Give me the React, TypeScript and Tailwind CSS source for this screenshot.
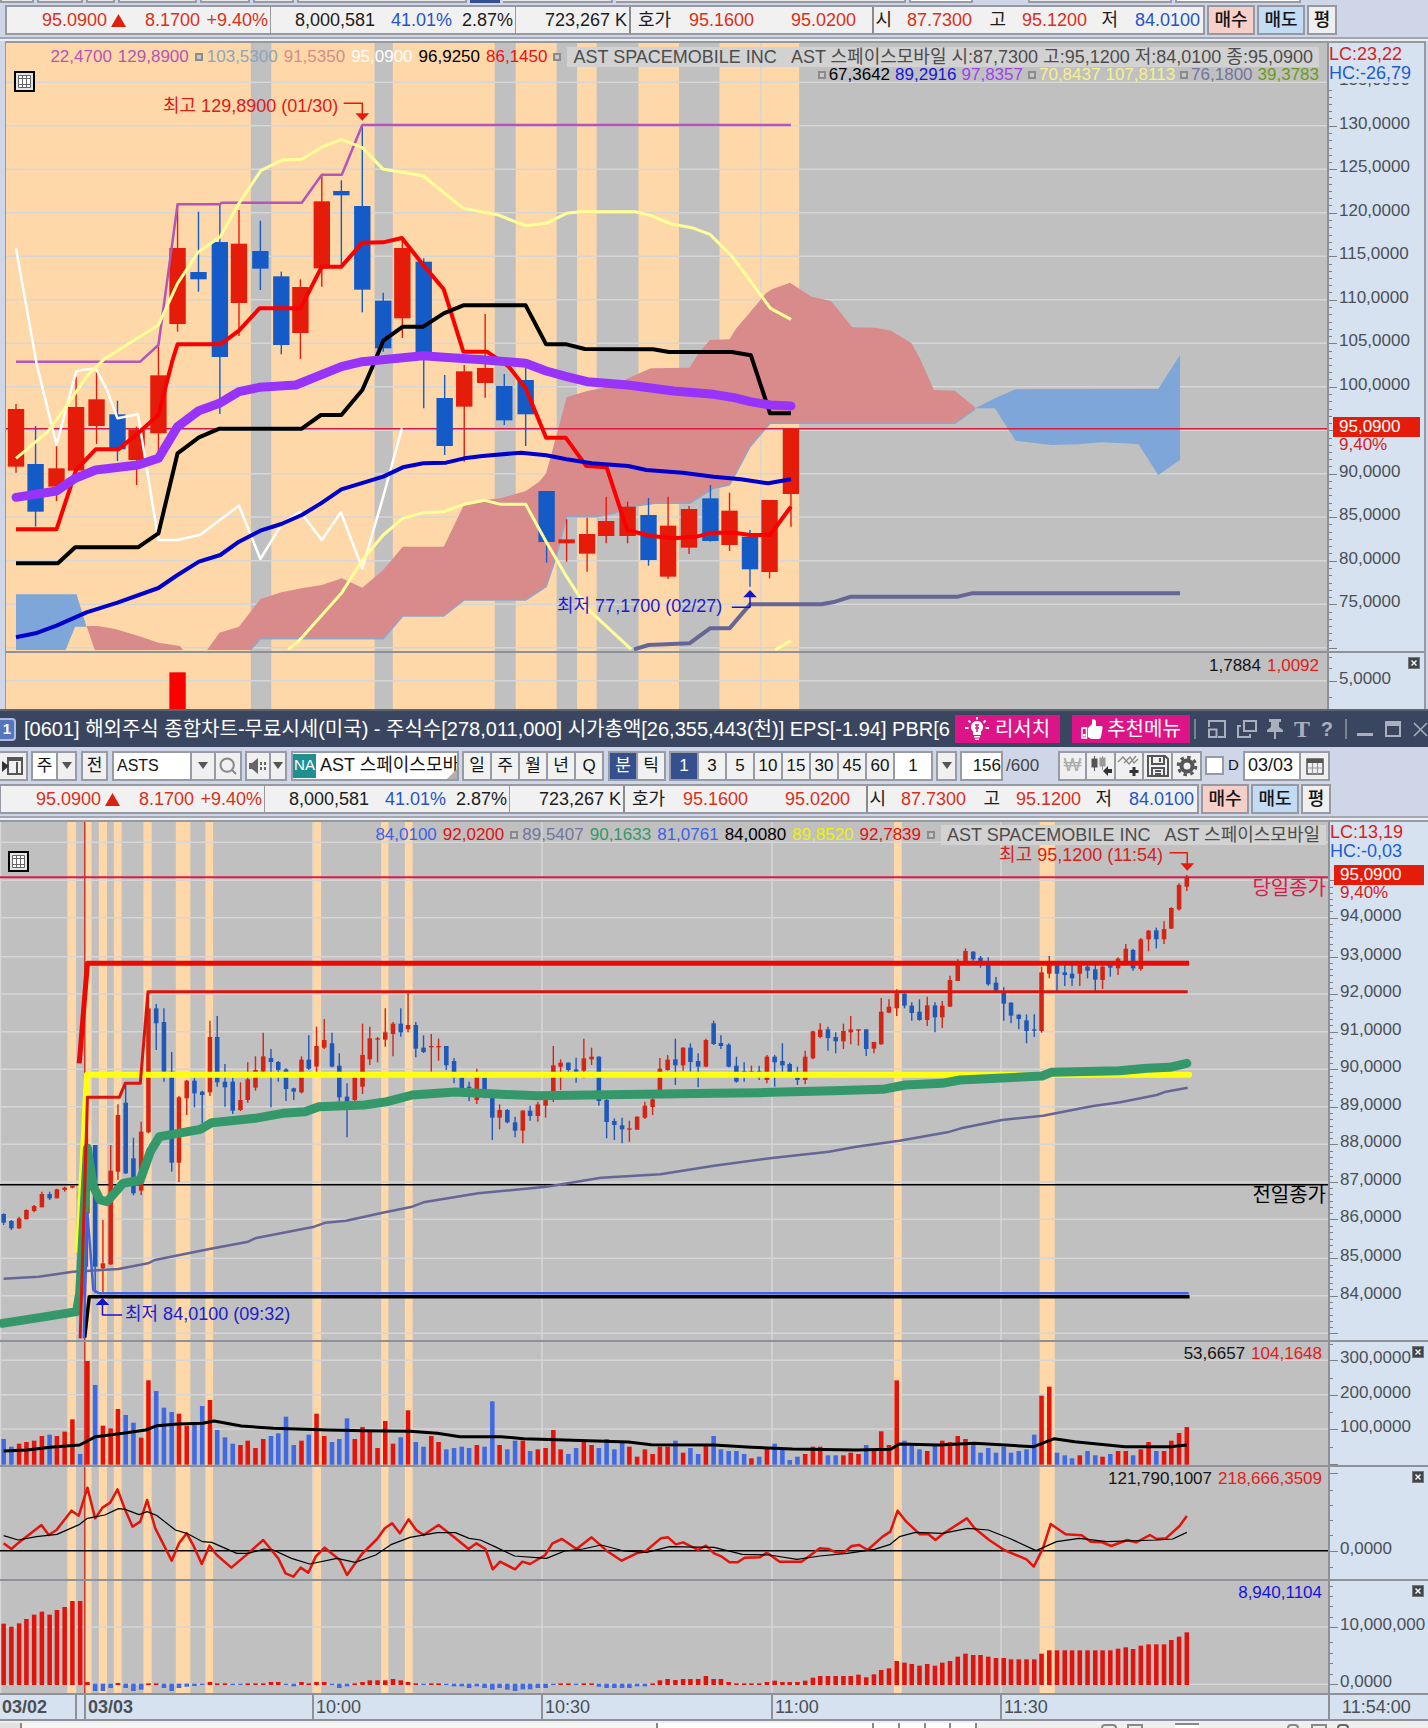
import React from "react";
import {
  CalendarDays,
  Save,
  Search,
  Settings,
  ThumbsUp,
  Volume1,
} from "lucide-react";

/* ------------------------------------------------------------------ */
/* Plot units: every horizontal pixel is 2.196 units, every vertical 3 */
/* ------------------------------------------------------------------ */

const Y_UNIT = 3;

type Pt = [number, number];
type Candle = [x: number, high: number, top: number, bottom: number, low: number, color: "R" | "B"];

const shift = (pts: Pt[], dy: number): Pt[] => pts.map(([x, y]) => [x, y + dy]);
const str = (pts: Pt[]) => pts.map((p) => p.join(",")).join(" ");

const PEACH = "#fed8a8";
const GRID = "#d6d6d6";
const UP = "#e61c0a";
const DOWN = "#155bc8";

function Line({ pts, color, w }: { pts: Pt[]; color: string; w: number }) {
  return (
    <polyline
      points={str(pts)}
      fill="none"
      stroke={color}
      strokeWidth={w}
      strokeLinejoin="round"
      strokeLinecap={w > 5 ? "round" : "butt"}
    />
  );
}

function Candles({ data, half, up = UP, down = DOWN }: { data: Candle[]; half: number; up?: string; down?: string }) {
  return (
    <>
      {data.map(([x, h, t, b, l, c], i) => {
        const color = c === "R" ? up : down;
        return (
          <g key={i}>
            <line x1={x} x2={x} y1={h} y2={l} stroke={color} strokeWidth={1.4} />
            <rect x={x - half} width={half * 2} y={t} height={Math.max(b - t, 4)} fill={color} />
          </g>
        );
      })}
    </>
  );
}

/* ---------------------------- daily chart ---------------------------- */

const D_BANDS: Pt[] = [
  [13, 551], [596, 823], [863, 1087], [1133, 1223], [1268, 1311], [1403, 1492], [1581, 1756],
];
const D_GRID = [247, 377, 508, 638, 769, 899, 1030, 1160, 1291, 1421, 1551, 1682, 1813, 1943];

const dUpperBand: Pt[] = [
  [35, 1085], [308, 1085], [348, 1035], [390, 613], [483, 613], [487, 608], [663, 608], [707, 524],
  [751, 524], [796, 375], [1738, 375],
];
const dYellowTop: Pt[] = [
  [35, 1375], [105, 1295], [150, 1210], [190, 1130], [228, 1078], [348, 975], [390, 850], [435, 757],
  [484, 710], [525, 610], [573, 512], [620, 480], [663, 478], [705, 443], [750, 418], [796, 443],
  [842, 508], [885, 517], [930, 528], [1018, 625], [1095, 645], [1155, 677], [1200, 670], [1245, 640],
  [1275, 635], [1395, 635], [1430, 647], [1475, 672], [1520, 683], [1560, 703], [1608, 768],
  [1693, 925], [1738, 958],
];
const dYellowLow: Pt[] = shift(
  [
    [633, 868], [655, 845], [750, 700], [796, 600], [842, 525], [885, 475], [930, 458], [975, 455],
    [1020, 433], [1065, 421], [1100, 433], [1155, 433], [1200, 545], [1245, 650], [1290, 745], [1387, 868],
  ],
  1080,
);
const dWhite: Pt[] = [
  [35, 745], [80, 1090], [124, 1335], [167, 1115], [180, 1110], [210, 1105], [235, 1170], [258, 1255],
  [303, 1243], [348, 1620], [390, 1620], [440, 1604], [525, 1517], [572, 1677], [620, 1570], [660, 1535],
  [707, 1620], [749, 1537], [796, 1705], [842, 1490], [883, 1285],
];
const dRed: Pt[] = [
  [35, 1588], [124, 1588], [167, 1410], [210, 1348], [260, 1348], [303, 1300], [348, 1245], [378, 1085],
  [390, 1033], [484, 1033], [525, 992], [570, 925], [660, 925], [707, 800], [750, 800], [796, 728],
  [842, 727], [883, 714], [930, 795], [975, 868], [1018, 1055], [1070, 1055], [1118, 1100],
  [1155, 1165], [1200, 1313], [1243, 1313], [1288, 1398], [1333, 1402], [1378, 1590], [1430, 1608],
  [1480, 1615], [1530, 1610], [1568, 1598], [1613, 1598], [1648, 1605], [1692, 1605], [1738, 1520],
];
const dBlack: Pt[] = [
  [35, 1690], [127, 1690], [165, 1642], [303, 1642], [348, 1600], [390, 1360], [437, 1312], [482, 1286],
  [663, 1286], [705, 1245], [750, 1245], [796, 1170], [820, 1095], [842, 1022], [885, 980], [930, 980],
  [975, 940], [1018, 916], [1155, 916], [1200, 1033], [1245, 1033], [1285, 1047], [1435, 1048],
  [1470, 1056], [1608, 1056], [1650, 1066], [1692, 1240], [1738, 1240],
];
const dPurple: Pt[] = [
  [35, 1492], [124, 1473], [165, 1435], [210, 1410], [303, 1395], [348, 1375], [390, 1280], [437, 1232],
  [482, 1210], [525, 1175], [570, 1162], [650, 1155], [750, 1100], [796, 1085], [885, 1073], [930, 1067],
  [975, 1072], [1060, 1079], [1155, 1090], [1200, 1113], [1245, 1130], [1290, 1145], [1380, 1155],
  [1480, 1173], [1568, 1183], [1613, 1193], [1648, 1205], [1692, 1215], [1738, 1218],
];
const dBlue: Pt[] = shift(
  [
    [35, 832], [78, 820], [124, 797], [190, 757], [258, 728], [348, 684], [390, 645], [437, 605],
    [484, 585], [525, 545], [572, 512], [618, 492], [663, 465], [705, 430], [750, 388], [842, 350],
    [885, 322], [930, 310], [980, 308], [1020, 295], [1060, 288], [1145, 278], [1200, 286], [1245, 298],
    [1300, 310], [1380, 318], [1420, 330], [1500, 338], [1568, 350], [1628, 358], [1688, 370], [1738, 358],
  ],
  1080,
);
const dSlate: Pt[] = shift(
  [
    [1393, 868], [1425, 855], [1515, 850], [1560, 805], [1603, 805], [1648, 733], [1805, 733],
    [1835, 725], [1870, 710], [2105, 710], [2135, 700], [2593, 700],
  ],
  1080,
);
const cloudRedLeft: Pt[] = shift(
  [[190, 798], [215, 798], [255, 808], [303, 827], [348, 848], [395, 858], [402, 870], [208, 870]],
  1080,
);
const cloudBlueLeft: Pt[] = shift(
  [[35, 703], [168, 703], [190, 800], [165, 800], [144, 870], [35, 870]],
  1080,
);
const cloudTop: Pt[] = shift(
  [
    [455, 870], [482, 818], [525, 800], [572, 717], [618, 697], [663, 685], [707, 675], [751, 655],
    [796, 683], [842, 630], [885, 560], [975, 560], [1020, 433], [1060, 421], [1100, 415], [1155, 393],
    [1185, 365], [1200, 340], [1222, 230], [1245, 112], [1290, 93], [1350, 78], [1380, 55], [1430, 25],
    [1515, 23], [1535, -20], [1560, -60], [1603, -62], [1618, -95], [1643, -135], [1683, -200],
    [1696, -212], [1736, -232], [1783, -190], [1826, -177], [1873, -98], [1923, -97], [1958, -88],
    [2003, -50], [2023, 0], [2052, 90], [2098, 92], [2143, 142],
  ],
  1080,
);
const cloudBottom: Pt[] = shift(
  [
    [2143, 147], [2098, 190], [1692, 190], [1648, 260], [1613, 350], [1603, 375], [1568, 385],
    [1515, 430], [1440, 430], [1400, 437], [1380, 440], [1350, 460], [1310, 470], [1245, 470],
    [1222, 590], [1200, 680], [1155, 720], [1020, 720], [975, 768], [885, 768], [842, 836], [572, 836],
    [550, 870],
  ],
  1080,
);
const cloudBlueRight: Pt[] = [
  [2143, 1225], [2186, 1195], [2232, 1168], [2545, 1167], [2593, 1065], [2593, 1380], [2545, 1425],
  [2502, 1333], [2470, 1330], [2420, 1327], [2370, 1333], [2310, 1335], [2232, 1322], [2186, 1225],
];

const D_CANDLES: Candle[] = [
  [35, 1212, 1227, 1400, 1418, "R"], [78, 1278, 1392, 1535, 1580, "B"], [124, 1338, 1405, 1460, 1503, "R"],
  [167, 1130, 1221, 1412, 1412, "R"], [212, 1115, 1198, 1278, 1332, "R"], [258, 1202, 1243, 1348, 1383, "B"],
  [300, 1280, 1288, 1380, 1455, "R"], [348, 1040, 1126, 1300, 1380, "R"], [390, 613, 744, 972, 995, "R"],
  [436, 635, 816, 838, 875, "B"], [483, 613, 726, 1071, 1242, "B"], [525, 630, 731, 909, 1008, "R"],
  [572, 662, 753, 806, 870, "B"], [618, 815, 829, 1035, 1063, "B"], [660, 838, 861, 999, 1077, "R"],
  [707, 524, 604, 805, 860, "R"], [750, 541, 573, 586, 795, "B"], [796, 375, 618, 869, 937, "B"],
  [842, 878, 902, 1045, 1055, "B"], [884, 714, 744, 955, 1014, "R"], [931, 775, 785, 1060, 1225, "B"],
  [977, 1125, 1194, 1338, 1365, "B"], [1020, 1095, 1114, 1220, 1385, "R"], [1066, 942, 1104, 1149, 1193, "R"],
  [1108, 1122, 1158, 1261, 1275, "B"], [1155, 1090, 1140, 1243, 1338, "B"], [1201, 1473, 1473, 1626, 1688, "B"],
  [1245, 1558, 1618, 1630, 1685, "R"], [1290, 1553, 1602, 1661, 1715, "R"], [1332, 1490, 1563, 1608, 1630, "R"],
  [1379, 1505, 1520, 1608, 1630, "R"], [1425, 1494, 1545, 1680, 1697, "B"], [1468, 1490, 1577, 1730, 1737, "R"],
  [1514, 1518, 1527, 1643, 1662, "R"], [1561, 1455, 1495, 1623, 1625, "B"], [1603, 1478, 1532, 1635, 1653, "R"],
  [1648, 1590, 1610, 1708, 1760, "B"], [1691, 1500, 1500, 1716, 1735, "R"], [1738, 1286, 1286, 1482, 1580, "R"],
];

/* ---------------------------- minute chart ---------------------------- */

const M_BANDS: Pt[] = [
  [148, 167], [188, 201], [217, 235], [250, 267], [315, 333], [386, 418], [451, 468], [687, 705],
  [837, 853], [889, 906], [1963, 1980], [2283, 2316],
];
const M_VERT = [1, 687, 1190, 1695, 2198];
const M_GRID = [2527, 2641, 2753, 2870, 2982, 3095, 3208, 3320, 3433, 3546, 3658, 3775, 3887, 4000];
const barX = (i: number) => Math.round(8 + 16.76 * i);

/* high, top, bottom, low, colour of each one-minute bar */
const M_RAW = `940 942 968 975 B|960 963 985 990 B|950 955 985 987 R|928 930 958 958 R|915 918 933 937 R|875 882 922 922 R|875 882 895 900 B|866 868 895 895 R|860 863 870 875 R|855 857 863 865 R|860 875 895 905 B|590 740 940 1100 R|735 735 1100 1180 B|960 1090 1105 1180 R|735 812 1093 1095 R|613 645 815 840 R|555 608 820 822 B|713 775 880 886 B|665 695 872 885 R|275 325 697 700 R|312 325 370 450 B|325 366 515 545 B|456 515 788 815 B|588 592 788 846 R|540 542 595 645 R|533 542 580 622 B|572 575 585 670 B|362 411 577 588 R|348 411 547 560 B|492 545 562 620 B|533 545 632 642 B|547 600 630 633 R|487 538 600 608 R|469 510 563 572 R|398 469 515 520 R|447 474 486 622 B|483 486 510 545 B|505 508 567 603 B|563 565 575 600 B|469 479 577 580 R|406 479 506 510 B|380 438 500 520 R|357 420 443 447 R|398 430 500 502 B|460 497 592 605 B|550 590 605 712 B|530 533 600 610 R|371 465 560 582 R|380 415 478 495 R|411 415 419 487 R|325 397 419 440 R|366 371 402 469 R|325 371 397 410 B|280 375 388 397 R|366 375 446 472 B|406 443 456 459 B|402 438 441 515 R|416 438 441 482 R|438 438 496 510 B|474 483 533 550 B|530 533 570 575 B|545 560 563 603 B|506 530 600 612 R|530 533 575 595 B|575 590 653 720 B|613 630 653 688 R|627 630 667 670 B|650 667 692 712 B|630 632 692 730 R|617 632 648 662 B|605 613 648 665 R|590 600 617 653 R|438 496 600 606 R|478 488 500 570 R|487 488 510 515 B|473 508 515 548 B|416 475 512 535 R|443 470 478 495 R|469 470 603 617 B|590 600 666 715 B|655 663 675 720 B|653 676 688 730 B|662 685 689 725 R|649 650 689 690 R|605 617 653 657 R|595 598 621 645 R|474 506 580 582 R|465 479 510 512 R|416 478 496 555 B|442 443 496 512 R|430 443 486 515 B|460 483 500 562 B|416 420 500 502 R|362 370 432 435 B|406 429 438 447 B|430 434 500 502 B|470 497 545 548 B|487 514 518 545 B|497 514 518 520 R|497 514 518 540 B|465 470 540 550 R|465 470 487 560 B|430 483 496 515 B|488 492 520 525 B|500 533 540 555 B|452 470 540 553 R|392 394 475 478 R|370 389 411 415 R|380 388 414 452 B|397 411 424 460 B|371 393 424 447 R|348 388 397 433 R|388 388 392 437 R|388 388 447 468 B|425 426 446 460 R|294 335 433 434 R|298 320 338 340 R|268 280 325 348 R|280 281 317 325 B|307 317 339 362 B|298 335 360 362 B|290 316 360 378 R|307 316 352 397 B|303 317 352 384 R|227 240 320 320 R|178 190 243 243 R|145 153 190 190 R|154 155 178 182 B|168 173 190 203 B|172 190 253 257 B|231 248 275 276 B|262 275 311 362 B|307 308 347 370 B|343 344 357 388 B|343 361 393 430 B|343 388 392 411 B|200 217 393 398 R|168 190 221 235 R|190 195 221 275 B|195 217 225 258 B|195 221 235 258 B|190 195 221 258 R|190 200 212 235 B|195 208 239 272 B|195 200 240 267 R|190 195 203 230 B|172 176 205 225 R|132 146 190 190 R|146 150 205 212 B|114 118 207 212 R|90 92 118 154 R|83 91 118 145 B|64 87 118 132 R|22 24 86 87 R|-50 -45 28 32 R|-75 -70 -40 -27 R`;

const M_CANDLES: Candle[] = M_RAW.split("|").map((row, i) => {
  const [h, t, b, l, c] = row.split(" ");
  return [barX(i), +h + 2700, +t + 2700, +b + 2700, +l + 2700, c as "R" | "B"];
});

/* top edge and colour of each volume bar */
const VOLUME = `297B 320B 311R 306R 302R 288R 284B 288R 275R 238R 342B 63R 135B 257R 265R 207R 225B 248B 293R 121R 153B 203B 216B 221R 257R 253B 198B 180R 270B 292B 311B 315R 302R 324R 297R 288B 280B 230B 315B 302R 284B 221R 288R 306B 297B 235B 297R 261R 275R 324R 243R 311R 292B 211R 306B 320B 288R 306R 328B 324B 320B 324B 315R 320B 184B 315R 328B 302B 302R 333B 328R 324R 270R 328R 342B 324B 306R 315R 324B 297B 328B 306B 320R 350R 328R 342R 320R 320R 302B 338R 324B 342B 315R 288B 328B 333B 333B 342B 355R 350B 324R 311B 328B 360B 350B 342R 320R 320R 346B 346B 346R 338R 342R 315B 328R 274R 315R 121R 302B 315B 328B 333R 315B 302R 306R 288R 297R 315B 338B 324B 338B 320B 338B 333B 328B 284B 167R 140R 338B 346B 355B 346R 333B 346B 350R 342B 333R 333R 346B 328R 306R 333B 333R 302R 279R 261R`.split(" ");

/* end of each net-buying bar, measured against the 1034 base line */
const NET = `851 860 850 837 824 815 824 810 801 783 783 1026 1053 1053 1044 1029 1044 1053 1049 1030 1030 1044 1053 1044 1040 1038 1035 1026 1030 1030 1035 1035 1030 1030 1030 1026 1026 1035 1039 1026 1030 1026 1026 1035 1044 1039 1030 1026 1021 1021 1021 1017 1021 1026 1030 1035 1030 1030 1035 1039 1039 1044 1039 1044 1049 1044 1049 1053 1048 1048 1044 1044 1035 1030 1030 1035 1030 1030 1040 1044 1044 1044 1044 1039 1039 1030 1021 1017 1020 1017 1017 1017 1008 1017 1017 1026 1030 1030 1030 1030 1026 1022 1026 1026 1026 1022 1013 1008 1008 1008 1008 1008 1004 1012 1003 990 985 963 968 972 977 972 977 968 963 950 941 945 945 950 954 954 958 958 958 958 941 931 931 931 931 931 931 931 931 931 926 922 927 917 913 913 913 900 890 877`
  .split(" ")
  .map(Number);

const mGreen: Pt[] = shift(
  [
    [5, 1270], [100, 1250], [168, 1235], [175, 1180], [192, 745], [205, 860], [220, 900], [235, 905],
    [270, 850], [308, 840], [330, 755], [350, 710], [400, 698], [440, 688], [465, 668], [560, 655],
    [620, 640], [670, 635], [700, 620], [800, 615], [850, 605], [905, 585], [1000, 576], [1100, 583],
    [1180, 587], [1568, 580], [1668, 578], [1828, 572], [1938, 568], [1988, 555], [2068, 550],
    [2108, 540], [2288, 528], [2308, 517], [2458, 512], [2518, 505], [2568, 502], [2606, 490],
  ],
  2700,
);
const mSlate: Pt[] = shift(
  [
    [8, 1136], [85, 1130], [160, 1115], [260, 1107], [325, 1090], [340, 1080], [460, 1047], [545, 1025],
    [560, 1015], [690, 980], [715, 968], [760, 962], [840, 938], [905, 920], [930, 907], [1050, 880],
    [1200, 860], [1320, 833], [1450, 823], [1568, 797], [1700, 773], [1820, 755], [1880, 740],
    [1975, 722], [2080, 697], [2110, 685], [2200, 660], [2290, 647], [2400, 618], [2460, 607],
    [2540, 585], [2560, 575], [2608, 563],
  ],
  2700,
);
const volAvg: Pt[] = shift(
  [
    [8, 333], [60, 330], [110, 322], [175, 315], [210, 290], [270, 280], [320, 270], [345, 257],
    [390, 252], [445, 250], [470, 243], [530, 258], [600, 265], [720, 270], [800, 272], [900, 274],
    [960, 280], [1010, 290], [1100, 290], [1150, 296], [1240, 300], [1380, 306], [1430, 314],
    [1568, 315], [1650, 322], [1740, 327], [1880, 330], [1955, 328], [1975, 312], [2060, 315],
    [2140, 310], [2270, 320], [2315, 296], [2360, 305], [2470, 320], [2570, 320], [2606, 315],
  ],
  4020,
);
const oscRed: Pt[] = shift(
  [
    [8, 610], [25, 627], [41, 608], [91, 555], [107, 585], [124, 570], [157, 512], [173, 527], [192, 443],
    [209, 535], [225, 503], [242, 488], [258, 448], [275, 510], [291, 560], [308, 545], [323, 480],
    [341, 565], [377, 662], [393, 610], [410, 580], [426, 620], [443, 672], [460, 617], [476, 645],
    [508, 683], [545, 640], [578, 600], [611, 655], [627, 700], [644, 710], [660, 683], [677, 698],
    [693, 650], [713, 623], [746, 660], [762, 705], [779, 672], [796, 640], [828, 597], [845, 565],
    [861, 550], [878, 580], [897, 538], [914, 570], [930, 585], [963, 555], [996, 590], [1029, 627],
    [1046, 610], [1066, 627], [1082, 688], [1098, 665], [1131, 688], [1147, 665], [1164, 672],
    [1197, 645], [1213, 610], [1234, 597], [1266, 627], [1299, 592], [1332, 632], [1365, 662],
    [1398, 640], [1418, 633], [1451, 595], [1467, 592], [1484, 613], [1500, 607], [1533, 630],
    [1550, 617], [1568, 640], [1585, 650], [1602, 667], [1620, 667], [1635, 653], [1668, 652],
    [1684, 638], [1712, 665], [1760, 665], [1775, 650], [1800, 625], [1820, 627], [1835, 637],
    [1855, 635], [1870, 618], [1887, 615], [1905, 630], [1938, 590], [1955, 575], [1971, 512],
    [1990, 545], [2020, 583], [2038, 582], [2054, 600], [2070, 582], [2123, 535], [2140, 565],
    [2172, 600], [2205, 630], [2254, 658], [2270, 680], [2290, 625], [2307, 552], [2340, 583],
    [2375, 586], [2395, 605], [2420, 607], [2440, 618], [2475, 600], [2495, 607], [2525, 585],
    [2540, 597], [2560, 595], [2590, 558], [2606, 528],
  ],
  4020,
);
const oscBlack: Pt[] = shift(
  [
    [8, 587], [40, 600], [80, 590], [125, 583], [175, 553], [192, 535], [230, 525], [260, 506],
    [275, 508], [305, 524], [323, 515], [345, 527], [385, 570], [410, 580], [445, 605], [465, 607],
    [490, 622], [520, 640], [545, 640], [580, 627], [600, 630], [640, 655], [680, 672], [740, 655],
    [780, 667], [825, 645], [860, 613], [900, 592], [960, 578], [1000, 578], [1030, 595], [1055, 600],
    [1090, 622], [1130, 648], [1200, 655], [1240, 633], [1280, 627], [1320, 615], [1370, 633],
    [1420, 637], [1470, 620], [1568, 622], [1630, 643], [1690, 645], [1750, 658], [1800, 648],
    [1860, 640], [1920, 628], [1955, 613], [1975, 590], [2010, 577], [2070, 580], [2125, 565],
    [2170, 570], [2220, 597], [2275, 632], [2320, 605], [2370, 595], [2430, 605], [2540, 600],
    [2575, 597], [2606, 577],
  ],
  4020,
);

/* ------------------------------ panels ------------------------------ */

type Label = { y: number; text: string };

function Axis({ y0, ticks, labels, minor, width, children }: {
  y0: number;
  ticks: number[];
  labels: Label[];
  minor: number[];
  width: string;
  children?: React.ReactNode;
}) {
  return (
    <div className={`relative shrink-0 overflow-hidden border-l-2 border-[#8e9298] bg-[#d6e2f0] text-[#4b4f55] ${width}`}>
      {minor.map((y) => (
        <i key={y} className="absolute left-0 h-px w-[3px] bg-[#7b8087]" style={{ top: Math.round((y - y0) / Y_UNIT) }} />
      ))}
      {ticks.map((y) => (
        <i key={y} className="absolute left-0 h-px w-2 bg-[#7b8087]" style={{ top: Math.round((y - y0) / Y_UNIT) }} />
      ))}
      {labels.map((l) => (
        <span
          key={l.text}
          className="absolute left-2.5 whitespace-nowrap text-[17px] leading-5"
          style={{ top: Math.round((l.y - y0) / Y_UNIT) - 12 }}
        >
          {l.text}
        </span>
      ))}
      {children}
    </div>
  );
}

function Plot({ x0, w, y0, h, height, bands, hGrid, vGrid, session, children, overlay }: {
  x0: number;
  w: number;
  y0: number;
  h: number;
  height: string;
  bands: Pt[];
  hGrid: number[];
  vGrid: number[];
  session?: number;
  children?: React.ReactNode;
  overlay?: React.ReactNode;
}) {
  return (
    <div className="relative min-w-0 flex-1 overflow-hidden bg-[#c0c0c0]">
      <svg
        viewBox={`${x0} ${y0} ${w} ${h}`}
        preserveAspectRatio="none"
        className={`block w-full [&_*]:[vector-effect:non-scaling-stroke] ${height}`}
        aria-hidden="true"
      >
        {bands.map(([a, b]) => (
          <rect key={a} x={a} y={y0} width={b - a} height={h} fill={PEACH} />
        ))}
        {hGrid.map((y) => (
          <line key={y} x1={x0} x2={x0 + w} y1={y} y2={y} stroke={GRID} strokeWidth={1.5} />
        ))}
        {vGrid.map((x) => (
          <line key={x} x1={x} x2={x} y1={y0} y2={y0 + h} stroke={GRID} strokeWidth={1.5} />
        ))}
        {session !== undefined && (
          <line x1={session} x2={session} y1={y0} y2={y0 + h} stroke="#d03a34" strokeWidth={1.5} />
        )}
        {children}
      </svg>
      {overlay}
    </div>
  );
}

function minorTicks(grid: number[], div: number) {
  const out: number[] = [];
  for (let i = 0; i + 1 < grid.length; i++)
    for (let k = 1; k < div; k++) out.push(grid[i] + ((grid[i + 1] - grid[i]) * k) / div);
  return out;
}

function CloseBox({ label }: { label: string }) {
  return (
    <button
      aria-label={label}
      className="absolute right-1 top-1 flex size-3 items-center justify-center border border-[#777] bg-[#3f454c]"
    >
      <svg viewBox="0 0 8 8" className="size-2" stroke="#fff" strokeWidth="1.4">
        <path d="M1.5 1.5l5 5M6.5 1.5l-5 5" />
      </svg>
    </button>
  );
}

function TableIcon({ place }: { place: string }) {
  return (
    <button aria-label="데이터 표" className={`absolute flex size-[21px] items-center justify-center border-2 border-black bg-[#e4e4e4] ${place}`}>
      <svg viewBox="0 0 15 15" className="size-[15px]" fill="#fff" stroke="#666" strokeWidth="1">
        <path d="M1.5 1.5h12v12h-12zM1.5 4.5h12M1.5 10.5h12M5.5 1.5v12M9.5 1.5v12" />
      </svg>
    </button>
  );
}

const Square = () => <i className="size-2 shrink-0 self-center border-2 border-[#8b8b8b] bg-[#c8c8c8]" />;

function PriceTag({ y0, y }: { y0: number; y: number }) {
  return (
    <div className="absolute left-1 right-1 text-[17px]" style={{ top: Math.round((y - y0) / Y_UNIT) - 12 }}>
      <div className="h-5 bg-[#e61c0a] pl-1.5 leading-5 text-white">95,0900</div>
      <div className="h-4 pl-1.5 leading-4 text-[#d8201c]">9,40%</div>
    </div>
  );
}

/* ------------------------------ quote bar ------------------------------ */

const RED = "text-[#d8301c]";
const BLUE = "text-[#2454c8]";

function Cell({ w, tone = "text-[#1c1c1c]", children }: { w: string; tone?: string; children: React.ReactNode }) {
  return <span className={`shrink-0 whitespace-nowrap text-right ${w} ${tone}`}>{children}</span>;
}

function QuoteBar({ lead }: { lead: string }) {
  const rule = "h-full w-[3px] shrink-0 border-r border-[#9a9a9a]";
  return (
    <div className={`flex h-[30px] shrink-0 items-stretch gap-[2px] text-[18px] ${lead}`}>
      <div className="flex w-[1200px] items-center border-2 border-[#9699a1] bg-[#f1f1f1] leading-6">
        <Cell w="w-[100px]" tone={RED}>95.0900</Cell>
        <svg viewBox="0 0 15 13" className="ml-1 h-[13px] w-[15px] shrink-0" fill="#e0200f">
          <path d="M7.5 0L15 13H0z" />
        </svg>
        <Cell w="w-[74px]" tone={RED}>8.1700</Cell>
        <Cell w="w-[68px]" tone={RED}>+9.40%</Cell>
        <i className={rule} />
        <Cell w="w-[104px]">8,000,581</Cell>
        <Cell w="w-[77px]" tone={BLUE}>41.01%</Cell>
        <Cell w="w-[61px]">2.87%</Cell>
        <i className={rule} />
        <Cell w="w-[111px]">723,267 K</Cell>
        <i className="h-full w-1 shrink-0 border-r-2 border-[#8a8a8a]" />
        <Cell w="w-10">호가</Cell>
        <Cell w="w-[83px]" tone={RED}>95.1600</Cell>
        <Cell w="w-[102px]" tone={RED}>95.0200</Cell>
        <i className="h-full w-[18px] shrink-0 border-r-2 border-[#8a8a8a]" />
        <Cell w="w-[18px]">시</Cell>
        <Cell w="w-[80px]" tone={RED}>87.7300</Cell>
        <Cell w="w-[34px]">고</Cell>
        <Cell w="w-[81px]" tone={RED}>95.1200</Cell>
        <Cell w="w-[31px]">저</Cell>
        <Cell w="w-[82px]" tone={BLUE}>84.0100</Cell>
      </div>
      <button className="w-12 border-2 border-[#9699a1] bg-[#f5cfc8] font-medium">매수</button>
      <button className="w-12 border-2 border-[#9699a1] bg-[#c2dcf3] font-medium">매도</button>
      <button className="w-[30px] border-2 border-[#9699a1] bg-[#efefef] font-medium">평</button>
    </div>
  );
}

/* ------------------------------ toolbar ------------------------------ */

const box = "flex h-[30px] shrink-0 items-center justify-center border-2 border-[#989ba3] bg-[#f0f0f0]";
const joined = "flex h-[30px] shrink-0 items-center justify-center border-2 border-l-0 border-[#989ba3] bg-[#f0f0f0]";
const field = "h-[30px] shrink-0 border-2 border-[#989ba3] bg-white outline-none";

const Down = () => (
  <svg viewBox="0 0 10 7" className="h-[7px] w-2.5 shrink-0" fill="#555">
    <path d="M0 0h10L5 7z" />
  </svg>
);

function Segments({ items, active }: { items: string[]; active?: string }) {
  return (
    <div className="flex shrink-0 border-l-2 border-[#989ba3]">
      {items.map((t) => (
        <button
          key={t}
          aria-pressed={t === active}
          className={
            t === active
              ? "h-[30px] w-7 border-y-2 border-r-2 border-[#989ba3] bg-[#34508f] text-white"
              : "h-[30px] w-7 border-y-2 border-r-2 border-[#989ba3] bg-[#f1f1f1]"
          }
        >
          {t}
        </button>
      ))}
    </div>
  );
}

function Toolbar() {
  return (
    <div className="flex h-[37px] shrink-0 items-center overflow-hidden text-[17px] text-[#141414]">
      <button className={`${box} w-7 border-l-0`} aria-label="패널">
        <svg viewBox="0 0 22 20" className="h-5 w-[22px]" fill="none" stroke="#555" strokeWidth="2">
          <path d="M6 2h14v16H6zM15 6v12M6 4h14" />
          <path d="M0 5l7 5-7 6z" fill="#333" stroke="none" />
        </svg>
      </button>
      <button className={`${field} ml-[3px] w-[27px]`}>주</button>
      <button className={`${joined} w-[19px]`} aria-label="구분 선택"><Down /></button>
      <button className={`${box} ml-1 w-[27px]`}>전</button>
      <input aria-label="종목코드" defaultValue="ASTS" className={`${field} ml-1 w-20 px-[3px] text-[16px]`} />
      <button className={`${joined} w-[22px] border-r-0`} aria-label="종목 목록"><Down /></button>
      <button className={`${box} w-7 text-[#888]`} aria-label="검색"><Search size={20} strokeWidth={2.4} /></button>
      <button className={`${box} ml-[3px] w-[26px]`} aria-label="소리">
        <svg viewBox="0 0 20 20" className="size-5" fill="#666">
          <path d="M1 7h3l6-5v16l-6-5H1z" />
          <path d="M12 6h2v3h-2zM12 11h2v3h-2zM16 6h2v3h-2zM16 11h2v3h-2z" />
        </svg>
      </button>
      <button className={`${joined} w-4`} aria-label="소리 설정"><Down /></button>
      <div className="relative ml-1 flex h-[30px] w-[168px] shrink-0 items-center overflow-hidden border-2 border-[#989ba3] bg-white">
        <span className="flex h-6 w-[23px] shrink-0 items-center justify-center bg-[#1f8f92] text-[15px] text-white">NA</span>
        <span className="ml-1 whitespace-nowrap text-[18px]">AST 스페이스모바일</span>
        <svg viewBox="0 0 10 10" className="absolute bottom-0 right-0 size-2.5" fill="#b0b0b0"><path d="M10 0v10H0z" /></svg>
      </div>
      <div className="ml-[3px] flex"><Segments items={["일", "주", "월", "년", "Q"]} /></div>
      <div className="ml-1 flex"><Segments items={["분", "틱"]} active="분" /></div>
      <div className="ml-[3px] flex"><Segments items={["1", "3", "5", "10", "15", "30", "45", "60"]} active="1" /></div>
      <input aria-label="분 단위" defaultValue="1" className={`${field} w-[38px] border-l-0 text-center`} />
      <button className={`${box} ml-[3px] w-[21px]`} aria-label="분 단위 목록"><Down /></button>
      <input aria-label="조회 개수" defaultValue="156" className={`${field} ml-[3px] w-[43px] text-right`} />
      <span className="ml-[3px] w-[52px] shrink-0 text-[#444]">/600</span>
      <button className={`${box} w-[29px] text-[19px] text-[#aaa]`} aria-label="원화">₩</button>
      <button className={`${joined} w-[29px]`} aria-label="캔들 추가">
        <svg viewBox="0 0 24 22" className="h-[22px] w-6" fill="#555" stroke="#555">
          <path d="M5.500 1v15" /><rect x="3" y="4" width="5" height="8" />
          <path d="M13.500 1v14" stroke="#999" /><rect x="11" y="3" width="5" height="8" fill="#999" stroke="#999" />
          <path d="M23 14h-4v-3l-5 5 5 5v-3h4z" fill="#333" stroke="none" />
        </svg>
      </button>
      <button className={`${joined} w-7`} aria-label="지표 추가">
        <svg viewBox="0 0 24 22" className="h-[22px] w-6" fill="none" stroke="#888" strokeWidth="1.300">
          <path d="M1 7l5-5 6 7 7-8" /><path d="M7 8l6-6 4 6 4-4" />
          <path d="M17 12v9M12.500 16.500h9" stroke="#333" strokeWidth="3" />
        </svg>
      </button>
      <button className={`${joined} w-[29px] text-[#555]`} aria-label="저장">
        <svg viewBox="0 0 24 24" className="size-6" fill="none" stroke="currentColor" strokeWidth="2">
          <path d="M2 2h17l3 3v17H2zM6 2v8h12V2M14 4v4M6 22v-8h12v8M9 17h6M9 20h6" />
        </svg>
      </button>
      <button className={`${joined} w-[29px] text-[#555]`} aria-label="설정">
        <svg viewBox="0 0 22 22" className="size-[22px]" fill="none" stroke="currentColor">
          <circle cx="11" cy="11" r="5.500" strokeWidth="4" />
          <circle cx="11" cy="11" r="8.800" strokeWidth="3" strokeDasharray="3.450 3.450" />
        </svg>
      </button>
      <label className="ml-[3px] flex shrink-0 items-center gap-1">
        <input type="checkbox" className="size-[19px] appearance-none border-2 border-[#989ba3] bg-white" />
        <span className="w-[11px] text-[15px]">D</span>
      </label>
      <input aria-label="날짜" defaultValue="03/03" className={`${field} ml-1 w-[58px] px-[3px] text-[18px]`} />
      <button className={`${joined} w-[29px] text-[#555]`} aria-label="달력">
        <svg viewBox="0 0 18 18" className="size-[18px]" fill="none" stroke="currentColor" strokeWidth="1.500">
          <path d="M1 2h16v15H1z" />
          <path d="M1 4h16" strokeWidth="4" />
          <path d="M1 11h16M6.500 6v11M11.500 6v11" stroke="#999" strokeWidth="1.200" />
        </svg>
      </button>
    </div>
  );
}

function TitleBar() {
  return (
    <header className="flex h-[38px] shrink-0 items-center overflow-hidden border-t-2 border-[#5d6470] bg-[#3a465f] text-[20px] text-white">
      <span className="flex h-[23px] w-4 shrink-0 items-center justify-center rounded-r border-2 border-l-0 border-[#aebbe0] bg-[#5576bd] text-[15px] font-bold">1</span>
      <h1 className="ml-2 min-w-0 flex-1 overflow-hidden whitespace-nowrap">
        [0601] 해외주식 종합차트-무료시세(미국) - 주식수[278,011,000] 시가총액[26,355,443(천)] EPS[-1.94] PBR[6
      </h1>
      <button className="flex h-7 w-[105px] shrink-0 items-center justify-center gap-1.5 bg-[#dd1487]">
        <svg viewBox="0 0 24 24" className="size-6 shrink-0" fill="#fff">
          <path d="M12 4a6 6 0 0 0-4 10.500V18h8v-3.500A6 6 0 0 0 12 4zM9 19h6v1.500H9zM10 21.500h4V23h-4z" />
          <path d="M12 0v2.500M3.500 3.500l2 2M20.500 3.500l-2 2M0 11h3.500M20.500 11H24" stroke="#fff" strokeWidth="2" />
          <path d="M10 8h4M10 11h4M12 8v7" stroke="#dd1487" strokeWidth="1.500" />
        </svg>
        리서치
      </button>
      <button className="ml-3 flex h-7 w-[118px] shrink-0 items-center justify-center gap-1 bg-[#dd1487]">
        <svg viewBox="0 0 22 22" className="size-[22px] shrink-0" fill="#fff">
          <path d="M7 10l4-4V1.500c2.500-1 4 .5 4 2.500v4h5q2 0 1.500 2L20 19q-.5 2-2.500 2H10l-3-2z" />
          <path d="M1 10h4.500v10H1z" fill="none" stroke="#fff" strokeWidth="1.500" />
          <path d="M2 16h2.500v2.500H2z" />
        </svg>
        추천메뉴
      </button>
      <i className="ml-1 h-5 w-0.5 shrink-0 bg-[#7a8294]" />
      <div className="ml-3 flex w-[125px] shrink-0 items-center justify-between text-[#a9afbd]">
        <svg viewBox="0 0 18 18" className="size-[18px]" fill="none" stroke="currentColor" strokeWidth="2">
          <path d="M1 7V1h16v16h-7M1 9.500h7.500V17H1z" />
        </svg>
        <svg viewBox="0 0 20 18" className="h-[18px] w-5" fill="none" stroke="currentColor" strokeWidth="2">
          <path d="M7 1h12v10H7zM4 6H1v11h12v-3" />
        </svg>
        <svg viewBox="0 0 16 20" className="h-5 w-4" fill="currentColor">
          <path d="M2 0h12v3h-2v5l4 3v2H9v7H7v-7H0v-2l4-3V3H2z" />
        </svg>
        <b className="font-['Liberation_Serif',serif] text-[24px] leading-6">T</b>
        <b className="text-[20px] leading-6">?</b>
      </div>
      <i className="ml-3 h-5 w-0.5 shrink-0 bg-[#7a8294]" />
      <div className="ml-2.5 flex w-[71px] shrink-0 items-center justify-between text-[#a9afbd]">
        <svg viewBox="0 0 16 18" className="h-[18px] w-4" stroke="currentColor" strokeWidth="3"><path d="M0 14.500h16" /></svg>
        <svg viewBox="0 0 16 18" className="h-[18px] w-4" fill="none" stroke="currentColor" strokeWidth="2">
          <path d="M1 2h14v14H1z" /><path d="M1 4h14" strokeWidth="4" />
        </svg>
        <svg viewBox="0 0 15 18" className="h-[18px] w-[15px]" stroke="currentColor" strokeWidth="1.500"><path d="M1 3l13 13M14 3L1 16" /></svg>
      </div>
    </header>
  );
}

/* ------------------------------ charts ------------------------------ */

function DailyChart() {
  const plot = { x0: 13, w: 2903, bands: D_BANDS, vGrid: [1672] };
  const labels = [135, 130, 125, 120, 115, 110, 105, 100, 95, 90, 85, 80, 75]
    .map((v, i) => ({ y: D_GRID[i], text: `${v},0000` }))
    .filter((l) => l.text !== "95,0000");
  return (
    <section className="ml-[5px] mr-0.5 flex flex-col border-l border-r-2 border-t-2 border-[#96999e] text-[17px]">
      <div className="flex border-b-2 border-[#8e9298]">
        <Plot
          {...plot}
          y0={129}
          h={1824}
          height="h-[608px]"
          hGrid={D_GRID}
          overlay={
            <>
              <div className="absolute right-2 top-1 flex items-center gap-1.5 whitespace-nowrap leading-5">
                <span className="text-[#b455b4]">22,4700</span>
                <span className="text-[#b455b4]">129,8900</span>
                <Square />
                <span className="-ml-0.5 text-[#8fa3bd]">103,5300</span>
                <span className="text-[#d98b8b]">91,5350</span>
                <span className="text-white">95,0900</span>
                <span className="text-black">96,9250</span>
                <span className="text-[#f01010]">86,1450</span>
                <Square />
                <span className="bg-[#d2d2d2] px-1.5 text-[18px] text-[#4c4c4c]">
                  AST SPACEMOBILE INC&nbsp;&nbsp; AST 스페이스모바일 시:87,7300 고:95,1200 저:84,0100 종:95,0900
                </span>
              </div>
              <div className="absolute right-2 top-[22px] flex items-center gap-[5px] whitespace-nowrap leading-5">
                <Square />
                <span className="-ml-0.5 text-black">67,3642</span>
                <span className="text-[#1414e0]">89,2916</span>
                <span className="text-[#a040f0]">97,8357</span>
                <Square />
                <span className="-ml-0.5 text-[#f6f08e]">70,8437</span>
                <span className="text-[#f6f08e]">107,8113</span>
                <Square />
                <span className="-ml-0.5 text-[#74749c]">76,1800</span>
                <span className="text-[#6b9a1c]">39,3783</span>
              </div>
              <TableIcon place="left-2 top-7" />
              <span className="absolute left-[157px] top-[53px] whitespace-nowrap text-[18px] leading-5 text-[#d8201c]">최고 129,8900 (01/30)</span>
              <span className="absolute left-[551px] top-[553px] whitespace-nowrap text-[18px] leading-5 text-[#1c1cd0]">최저 77,1700 (02/27)</span>
            </>
          }
        >
          <polygon points={str(cloudBlueLeft)} fill="#7ea6d8" />
          <polygon points={str(cloudRedLeft)} fill="#d98b8b" />
          <polygon points={str([...cloudTop, ...cloudBottom])} fill="#d98b8b" />
          <Line pts={cloudBottom} color="#93a5c6" w={1.5} />
          <polygon points={str(cloudBlueRight)} fill="#7ea6d8" />
          <line x1={13} x2={2918} y1={1286} y2={1286} stroke="#d81c3c" strokeWidth={1.5} />
          <Candles data={D_CANDLES} half={18} />
          <Line pts={dUpperBand} color="#b455b8" w={2.5} />
          <Line pts={dWhite} color="#ffffff" w={2.5} />
          <Line pts={dRed} color="#fa0000" w={4} />
          <Line pts={dBlack} color="#000000" w={4} />
          <Line pts={dBlue} color="#0000cc" w={4} />
          <Line pts={dYellowTop} color="#ffff99" w={3} />
          <Line pts={dYellowLow} color="#ffff99" w={3} />
          <Line pts={[[1703, 1950], [1738, 1922]]} color="#ffff99" w={3} />
          <Line pts={dSlate} color="#666696" w={4} />
          <Line pts={dPurple} color="#9834fa" w={9} />
          <Line pts={[[755, 310], [796, 310], [796, 342]]} color="#e61c0a" w={1.5} />
          <polygon points="781,340 811,340 796,362" fill="#e61c0a" />
          <Line pts={[[1608, 1822], [1648, 1822], [1648, 1790]]} color="#1414d0" w={1.5} />
          <polygon points="1633,1792 1663,1792 1648,1770" fill="#1414d0" />
        </Plot>
        <Axis y0={129} ticks={D_GRID} labels={labels} minor={minorTicks(D_GRID, 6)} width="w-[97px]">
          <div className="absolute left-0 right-0 top-0 bg-[#d6e2f0] pt-[2px] text-[18px] leading-[19px]">
            <div className="text-[#d8201c]">LC:23,22</div>
            <div className="text-[#1c5cd0]">HC:-26,79</div>
          </div>
          <PriceTag y0={129} y={1286} />
        </Axis>
      </div>
      <div className="flex">
        <Plot
          {...plot}
          y0={1959}
          h={168}
          height="h-[56px]"
          hGrid={[2042]}
          overlay={
            <div className="absolute right-2 top-[3px] flex gap-1.5 leading-5">
              <span>1,7884</span>
              <span className="text-[#e01c1c]">1,0092</span>
            </div>
          }
        >
          <rect x={372} y={2017} width={36} height={120} fill="#fa0000" />
        </Plot>
        <Axis y0={1959} ticks={[2042]} labels={[{ y: 2042, text: "5,0000" }]} minor={[1970, 2005, 2091]} width="w-[97px]">
          <CloseBox label="거래량 닫기" />
        </Axis>
      </div>
    </section>
  );
}

function MinuteChart() {
  const plot = { x0: 0, w: 2916, bands: M_BANDS, vGrid: M_VERT, session: 186 };
  const labels = M_GRID.slice(2, 13).map((y, i) => ({ y, text: `${94 - i},0000` }));
  const row = "flex border-b-2 border-[#8e9298]";
  const slot = "min-w-0 overflow-hidden whitespace-nowrap pl-0.5";
  return (
    <section className="flex flex-col border-t-2 border-[#96999e] text-[17px]">
      <div className={row}>
        <Plot
          {...plot}
          y0={2466}
          h={1554}
          height="h-[518px]"
          hGrid={M_GRID}
          overlay={
            <>
              <div className="absolute right-0.5 top-[3px] flex items-center gap-1.5 whitespace-nowrap leading-5">
                <span className="text-[#3d62e8]">84,0100</span>
                <span className="text-[#e01010]">92,0200</span>
                <Square />
                <span className="-ml-0.5 text-[#74749c]">89,5407</span>
                <span className="text-[#35986a]">90,1633</span>
                <span className="text-[#3d62e8]">81,0761</span>
                <span className="text-black">84,0080</span>
                <span className="text-[#f0f000]">89,8520</span>
                <span className="text-[#e01010]">92,7839</span>
                <Square />
                <span className="bg-[#d2d2d2] px-1.5 text-[18px] text-[#4c4c4c]">AST SPACEMOBILE INC&nbsp;&nbsp; AST 스페이스모바일</span>
              </div>
              <TableIcon place="left-2 top-[29px]" />
              <span className="absolute right-[165px] top-[23px] whitespace-nowrap text-[18px] leading-5 text-[#d8201c]">최고 95,1200 (11:54)</span>
              <span className="absolute right-0.5 top-14 text-[20px] leading-5 text-[#d81c4c]">당일종가</span>
              <span className="absolute right-0.5 top-[363px] text-[20px] leading-5 text-black">전일종가</span>
              <span className="absolute left-[125px] top-[482px] whitespace-nowrap text-[18px] leading-5 text-[#1c1cd0]">최저 84,0100 (09:32)</span>
            </>
          }
        >
          <line x1={0} x2={2921} y1={2632} y2={2632} stroke="#d81c4c" strokeWidth={2} />
          <line x1={0} x2={2921} y1={3554} y2={3554} stroke="#000" strokeWidth={1.5} />
          <Candles data={M_CANDLES} half={5} up="#d42414" down="#2058b8" />
          <Line pts={mSlate} color="#666696" w={2.5} />
          <Line pts={[[172, 3750], [182, 3470], [191, 3224], [2611, 3224]]} color="#ffff14" w={6} />
          <Line pts={mGreen} color="#35986a" w={9} />
          <Line pts={[[174, 3190], [192, 2890], [2611, 2890]]} color="#ea0a04" w={5} />
          <Line pts={[[186, 4013], [196, 3890], [2612, 3890]]} color="#000" w={3.5} />
          <Line pts={[[184, 4015], [192, 3640], [205, 3870], [218, 3880], [2610, 3880]]} color="#3d62e8" w={2.5} />
          <Line pts={[[176, 4015], [192, 3292], [262, 3292], [275, 3250], [308, 3250], [325, 2975], [2608, 2975]]} color="#d8140c" w={3} />
          <Line pts={[[2568, 2558], [2607, 2558], [2607, 2592]]} color="#e61c0a" w={1.5} />
          <polygon points="2592,2590 2622,2590 2607,2612" fill="#e61c0a" />
          <Line pts={[[225, 3912], [225, 3945], [268, 3945]]} color="#1414d0" w={1.5} />
          <polygon points="210,3915 240,3915 225,3893" fill="#1414d0" />
        </Plot>
        <Axis y0={2466} ticks={M_GRID.slice(1)} labels={labels} minor={minorTicks(M_GRID.slice(1), 6)} width="w-[100px]">
          <div className="absolute left-0 right-0 top-0 pt-px text-[18px] leading-[19px]">
            <div className="text-[#d8201c]">LC:13,19</div>
            <div className="text-[#1c5cd0]">HC:-0,03</div>
          </div>
          <PriceTag y0={2466} y={2632} />
        </Axis>
      </div>

      <div className={row}>
        <Plot
          {...plot}
          y0={4026}
          h={369}
          height="h-[123px]"
          hGrid={[4081, 4184, 4287]}
          overlay={
            <div className="absolute right-1.5 top-0.5 flex gap-1.5 leading-5">
              <span>53,6657</span>
              <span className="text-[#e01c1c]">104,1648</span>
            </div>
          }
        >
          {VOLUME.map((v, i) => {
            const top = parseInt(v, 10) + 4020;
            return <rect key={i} x={barX(i) - 5} y={top} width={10} height={4394 - top} fill={v.endsWith("R") ? "#e4140c" : "#4169e1"} />;
          })}
          <Line pts={volAvg} color="#000" w={3} />
        </Plot>
        <Axis
          y0={4026}
          ticks={[4081, 4184, 4287, 4391]}
          labels={[{ y: 4081, text: "300,0000" }, { y: 4184, text: "200,0000" }, { y: 4287, text: "100,0000" }]}
          minor={[4031, 4134, 4237, 4341]}
          width="w-[100px]"
        >
          <CloseBox label="거래량 닫기" />
        </Axis>
      </div>

      <div className={row}>
        <Plot
          {...plot}
          y0={4401}
          h={336}
          height="h-[112px]"
          hGrid={[]}
          overlay={
            <div className="absolute right-1.5 top-0.5 flex gap-1.5 leading-5">
              <span>121,790,1007</span>
              <span className="text-[#e01c1c]">218,666,3509</span>
            </div>
          }
        >
          <line x1={0} x2={2921} y1={4652} y2={4652} stroke="#000" strokeWidth={1.5} />
          <Line pts={oscRed} color="#e2140c" w={2.5} />
          <Line pts={oscBlack} color="#000" w={1.2} />
        </Plot>
        <Axis
          y0={4401}
          ticks={[4418, 4652]}
          labels={[{ y: 4652, text: "0,0000" }]}
          minor={[4471, 4516, 4561, 4606, 4701]}
          width="w-[100px]"
        >
          <CloseBox label="지표 닫기" />
        </Axis>
      </div>

      <div className={row}>
        <Plot
          {...plot}
          y0={4743}
          h={336}
          height="h-[112px]"
          hGrid={[4881, 5053]}
          overlay={<div className="absolute right-1.5 top-0.5 leading-5 text-[#1414e0]">8,940,1104</div>}
        >
          {NET.map((v, i) =>
            v > 1034 ? (
              <rect key={i} x={barX(i) - 5} y={5051} width={10} height={Math.max(v + 4020 - 5051, 4)} fill="#4169e1" />
            ) : (
              <rect key={i} x={barX(i) - 5} y={v + 4020} width={10} height={Math.max(5055 - v - 4020, 4)} fill="#e0140c" />
            ),
          )}
        </Plot>
        <Axis
          y0={4743}
          ticks={[4881, 5053]}
          labels={[{ y: 4881, text: "10,000,000" }, { y: 5053, text: "0,0000" }]}
          minor={[4757, 4787, 4818, 4850, 4927, 4958, 4989, 5021]}
          width="w-[100px]"
        >
          <CloseBox label="수급 닫기" />
        </Axis>
      </div>

      <div className="flex h-[26px] border-b-2 border-[#8e9298] bg-[#d6e2f0] text-[18px] leading-6 text-[#4b4f55]">
        <div className="grid min-w-0 flex-1 grid-cols-[77fr_9fr_228fr_229fr_230fr_229fr_326fr] divide-x-2 divide-[#8e9298]">
          <span className={`${slot} font-bold`}>03/02</span>
          <span className="min-w-0" />
          <span className={`${slot} font-bold`}>03/03</span>
          <span className={slot}>10:00</span>
          <span className={slot}>10:30</span>
          <span className={slot}>11:00</span>
          <span className={slot}>11:30</span>
        </div>
        <span className="w-[100px] shrink-0 border-l-2 border-[#8e9298] pl-3">11:54:00</span>
      </div>
    </section>
  );
}

const TOP_STRIP = ["w-[34px]", "w-[46px]", "w-[29px]", "w-[79px]", "w-[50px]", "w-[41px]", "w-[170px]"];

export default function App() {
  return (
    <main className="flex w-full flex-col overflow-hidden bg-[#cfd6e8] font-['Liberation_Sans','Noto_Sans_CJK_KR',sans-serif] text-[#141414]">
      <div className="flex h-[5px] shrink-0 items-start gap-[3px]">
        {TOP_STRIP.map((w) => (
          <i key={w} className={`h-[3px] border-x-2 border-b-2 border-[#989ba3] bg-[#e8e8e8] ${w}`} />
        ))}
        <i className="h-[3px] w-[30px] bg-[#34508f]" />
        <i className="h-[3px] w-[110px] border-b-2 border-r-2 border-[#989ba3] bg-[#e8e8e8]" />
        <i className="h-[3px] w-[290px] border-b-2 border-r-2 border-[#989ba3] bg-[#e8e8e8]" />
        <i className="h-[3px] w-[64px] border-x-2 border-b-2 border-[#989ba3] bg-white" />
        <i className="ml-[52px] h-[3px] w-[144px] border-x-2 border-b-2 border-[#989ba3] bg-[#e8e8e8]" />
        <i className="h-[3px] w-[126px] border-x-2 border-b-2 border-[#989ba3] bg-white" />
      </div>
      <QuoteBar lead="ml-[5px]" />
      <div className="mt-0.5 h-1 shrink-0 border-t-2 border-[#a3a7b2] bg-[#eceef2]" />
      <DailyChart />
      <TitleBar />
      <Toolbar />
      <QuoteBar lead="-ml-px" />
      <div className="mt-0.5 h-1 shrink-0 border-t-2 border-[#a3a7b2] bg-[#eceef2]" />
      <MinuteChart />
      <footer className="flex h-[7px] shrink-0 items-end overflow-hidden bg-[#efefef]">
        <i className="h-[5px] w-[22px] border-r-2 border-[#888] bg-[#e2e2e2]" />
        <i className="h-[5px] w-[634px] bg-[#f6f6f6]" />
        <i className="h-[5px] w-[218px] border-x-2 border-[#888] bg-white" />
        <i className="h-[5px] w-[26px] border-r-2 border-[#888] bg-white" />
        <i className="h-[5px] w-[26px] border-r-2 border-[#888] bg-white" />
        <i className="h-[5px] w-[25px] border-r-2 border-[#888] bg-white" />
        <i className="h-[5px] w-[26px] border-r-2 border-[#888] bg-white" />
        <i className="ml-[124px] h-1 w-4 rounded-t border-2 border-b-0 border-[#888]" />
        <i className="ml-2.5 h-1 w-4 border-2 border-b-0 border-[#888]" />
        <i className="ml-[32px] h-[5px] w-6 border-t-2 border-[#888] bg-white" />
        <i className="ml-[88px] h-1 w-3 rounded-t-full border-2 border-b-0 border-[#888]" />
        <i className="ml-3 h-1 w-4 border-2 border-b-0 border-[#888]" />
        <i className="ml-2.5 h-1 w-3 rounded-t-full border-2 border-b-0 border-[#666]" />
      </footer>
    </main>
  );
}
